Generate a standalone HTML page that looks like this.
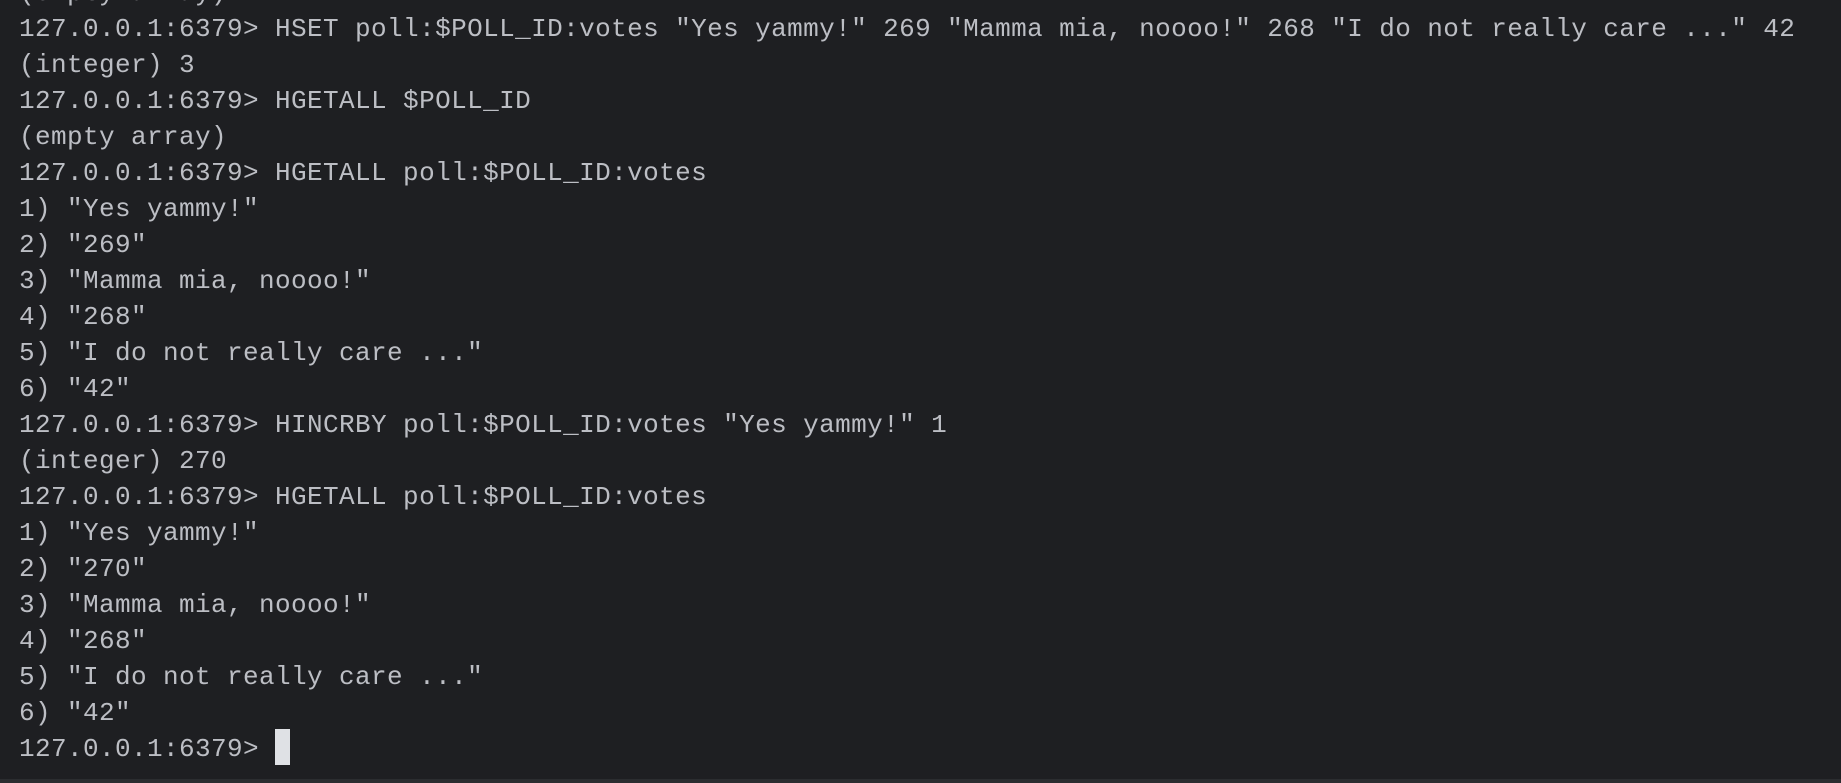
<!DOCTYPE html>
<html><head><meta charset="utf-8"><style>
html,body{margin:0;padding:0;width:1841px;height:783px;overflow:hidden;background:#1e1f22;}
#t{position:absolute;left:19px;top:-25px;font-family:"Liberation Mono",monospace;font-size:26px;letter-spacing:0.4px;line-height:36px;color:#bcbec4;white-space:pre;}
#c{position:absolute;left:275px;top:729px;width:15px;height:36px;background:#dfe1e5;}
#b{position:absolute;left:0;top:779px;width:1841px;height:4px;background:#2b2d30;}
</style></head><body>
<div id="t">(empty array)
127.0.0.1:6379&gt; HSET poll:$POLL_ID:votes "Yes yammy!" 269 "Mamma mia, noooo!" 268 "I do not really care ..." 42
(integer) 3
127.0.0.1:6379&gt; HGETALL $POLL_ID
(empty array)
127.0.0.1:6379&gt; HGETALL poll:$POLL_ID:votes
1) "Yes yammy!"
2) "269"
3) "Mamma mia, noooo!"
4) "268"
5) "I do not really care ..."
6) "42"
127.0.0.1:6379&gt; HINCRBY poll:$POLL_ID:votes "Yes yammy!" 1
(integer) 270
127.0.0.1:6379&gt; HGETALL poll:$POLL_ID:votes
1) "Yes yammy!"
2) "270"
3) "Mamma mia, noooo!"
4) "268"
5) "I do not really care ..."
6) "42"
127.0.0.1:6379&gt; </div>
<div id="c"></div>
<div id="b"></div>
</body></html>
